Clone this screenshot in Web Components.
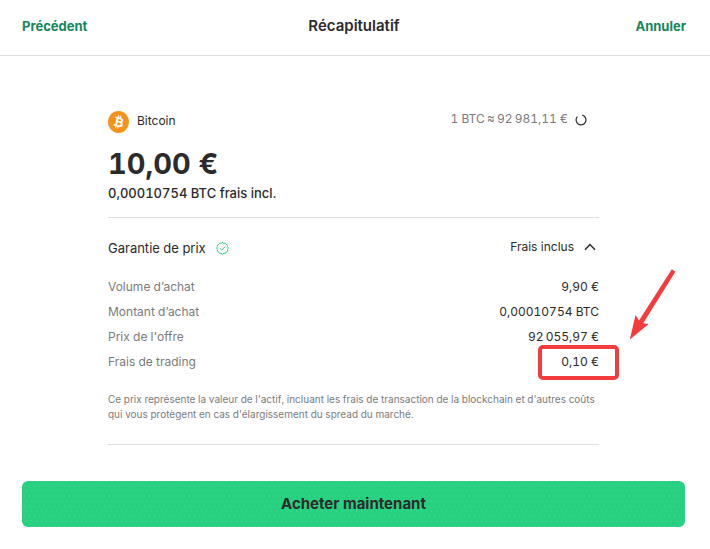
<!DOCTYPE html>
<html lang="fr">
<head>
<meta charset="utf-8">
<meta name="viewport" content="width=device-width, initial-scale=1">
<title>Récapitulatif</title>
<style>
  body { margin: 0; background: #fff; color: #2b2b2d; font-family: Inter, "Liberation Sans", sans-serif; font-variant-numeric: tabular-nums; --muted: #7b7b7d; --line: #e0e0e0; --green: #14875a; --mark: #f43b3e; }
</style>
</head>
<body>
<order-page></order-page>

<template id="order-page">
  <style>
    :host { display: flex; flex-direction: column; min-height: 100vh; }
    main { padding: 54px 111px 0 108px; }
    footer { padding: 36px 25px 22px 22px; }
  </style>
  <nav-header>
    <span slot="back">Précédent</span>
    Récapitulatif
    <span slot="cancel">Annuler</span>
  </nav-header>
  <main>
    <asset-summary></asset-summary>
    <price-details></price-details>
  </main>
  <footer><buy-button>Acheter maintenant</buy-button></footer>
</template>

<template id="nav-header">
  <style>
    :host { display: block; border-bottom: 1px solid var(--line); }
    header { display: grid; grid-template-columns: 1fr auto 1fr; align-items: center; height: 51px; padding: 0 24px 4px 22px; }
    h1 { margin: 0; font-size: 15px; font-weight: 600; line-height: 20px; }
    button { justify-self: start; border: 0; padding: 0; background: none; color: var(--green); font: 700 13px/20px Inter, sans-serif; cursor: pointer; }
    .end { justify-self: end; }
  </style>
  <header>
    <button type="button"><slot name="back"></slot></button>
    <h1><slot></slot></h1>
    <button type="button" class="end"><slot name="cancel"></slot></button>
  </header>
</template>

<template id="asset-summary">
  <style>
    :host { display: block; border-bottom: 1px solid var(--line); padding-bottom: 14px; }
    .top { display: flex; justify-content: space-between; align-items: center; height: 24px; }
    .asset, .rate { display: flex; align-items: center; gap: 8px; font-size: 12px; line-height: 20px; }
    .asset span { padding-bottom: 2px; }
    .rate { gap: 7px; padding: 0 12px 4px 0; color: var(--muted); }
    .rate span { padding-bottom: 2px; }
    svg { display: block; flex: none; }
    .rate svg { color: #2b2b2d; }
    .amount { margin: 11px 0 0; font-size: 29px; line-height: 38px; font-weight: 700; }
    .sub { margin: 0; font-size: 13px; line-height: 20px; font-weight: 500; }
  </style>
  <div class="top">
    <div class="asset">
      <svg width="21" height="22" viewBox="0 0 32 32" preserveAspectRatio="none" aria-hidden="true">
        <circle cx="16" cy="16" r="16" fill="#f7931a"/>
        <path fill="#fff" fill-rule="evenodd" d="M23.200 14c.3-2.100-1.300-3.200-3.500-4l.7-2.800-1.700-.4-.7 2.700-1.400-.3.700-2.800-1.700-.4-.7 2.800-3.500-.9-.5 1.800s1.300.3 1.200.3c.7.200.8.600.8 1l-2 7.900c-.1.200-.3.500-.8.400l-1.200-.3-.9 2 3.300.8-.7 2.900 1.700.4.700-2.900 1.400.4-.7 2.800 1.700.4.700-2.900c3 .6 5.200.3 6.100-2.300.8-2.100 0-3.400-1.500-4.200 1.100-.2 1.900-1 2.500-2.400zm-4 5.600c-.5 2.100-4.100 1-5.300.7l.9-3.800c1.200.3 5 .9 4.400 3.100zm.6-5.700c-.5 1.900-3.500.9-4.500.7l.8-3.500c1 .3 4.200.7 3.700 2.800z"/>
      </svg>
      <span>Bitcoin</span>
    </div>
    <div class="rate">
      <span>1 BTC&#8239;≈&#8239;92&#8239;981,11 €</span>
      <svg width="12" height="12" viewBox="0 0 12 12" fill="none" stroke="currentColor" stroke-width="1.200" aria-hidden="true"><path d="M7.300 1.200A4.900 4.900 0 1 1 2.400 2.600"/></svg>
    </div>
  </div>
  <p class="amount">10,00 €</p>
  <p class="sub">0,00010754 BTC frais incl.</p>
</template>

<template id="price-details">
  <style>
    :host { display: block; border-bottom: 1px solid var(--line); padding: 20px 0 22px; }
    .head { display: flex; justify-content: space-between; align-items: center; height: 20px; }
    h2 { display: flex; align-items: center; gap: 10px; margin: 0; font-size: 13px; font-weight: 400; line-height: 20px; }
    button { display: flex; align-items: center; gap: 10px; margin: 0; border: 0; padding: 0 3px 2px 0; background: none; color: inherit; font: 400 12px/20px Inter, sans-serif; cursor: pointer; }
    svg { display: block; flex: none; }
    dl { margin: 16px 0 0; }
    .note { margin: 18px 0 0; color: var(--muted); font-size: 10px; line-height: 15px; }
  </style>
  <div class="head">
    <h2>Garantie de prix
      <svg width="13" height="13" viewBox="0 0 14 14" fill="none" stroke="#25d07d" stroke-linejoin="round" stroke-linecap="round" aria-hidden="true">
        <path d="M7 .7Q8.200 2 9.900 1.200 10.500 2.900 12.500 3.300 12.100 5 13.300 6.500 12.100 7.800 12.700 9.800 10.900 10.200 10.400 12.100 8.500 11.700 7 13.300 5.500 11.700 3.600 12.100 3.100 10.200 1.300 9.800 1.900 7.800.7 6.500 1.900 5 1.500 3.300 3.500 2.900 4.100 1.200 5.800 2 7 .7Z"/>
        <path d="M4.700 7.200 6.300 8.700 9.400 5.500"/>
      </svg>
    </h2>
    <button type="button" aria-expanded="true">Frais inclus
      <svg width="12" height="8" viewBox="0 0 12 8" fill="none" stroke="currentColor" stroke-width="1.500" aria-hidden="true"><path d="M1 6.700 6 1.500 11 6.700"/></svg>
    </button>
  </div>
  <dl>
    <price-row><span slot="label">Volume d’achat</span>9,90 €</price-row>
    <price-row><span slot="label">Montant d’achat</span>0,00010754 BTC</price-row>
    <price-row><span slot="label">Prix de l'offre</span>92&#8239;055,97 €</price-row>
    <price-row marked><span slot="label">Frais de trading</span>0,10 €</price-row>
  </dl>
  <p class="note">Ce prix représente la valeur de l'actif, incluant les frais de transaction de la blockchain et d'autres coûts qui vous protègent en cas d'élargissement du spread du marché.</p>
</template>

<template id="price-row">
  <style>
    :host { display: block; position: relative; font-size: 12px; line-height: 25px; }
    div { display: flex; justify-content: space-between; }
    dt { color: var(--muted); }
    dd { margin: 0; }
    .box, .arrow { display: none; position: absolute; pointer-events: none; }
    :host([marked]) .box, :host([marked]) .arrow { display: block; }
    .box { box-sizing: border-box; right: -20px; top: -4px; width: 81px; height: 35px; border: 4px solid var(--mark); border-radius: 5px; }
    .arrow { right: -77px; bottom: 34px; }
  </style>
  <div><dt><slot name="label"></slot></dt><dd><slot></slot></dd></div>
  <span class="box"></span>
  <svg class="arrow" width="48" height="72" viewBox="0 0 48 72" aria-hidden="true"><path fill="var(--mark)" d="M43.800 1.200 47.400 3.800 15.200 55.200 20.700 56 1.800 71.500 7.600 47 11 52.500Z"/></svg>
</template>

<template id="buy-button">
  <style>
    :host { display: block; }
    button { display: block; width: 100%; height: 46px; border: 0; border-radius: 6px; padding: 0; color: #2b2b2d; font: 700 15px/24px Inter, sans-serif; cursor: pointer;
      background: radial-gradient(circle, #35d688 0 1px, transparent 1px) 0 0 / 5px 10px, radial-gradient(circle, #35d688 0 1px, transparent 1px) 2px 5px / 5px 10px, #27d17f; }
  </style>
  <button type="button"><slot></slot></button>
</template>

<script>
  for (const name of ["nav-header", "asset-summary", "price-row", "price-details", "buy-button", "order-page"]) {
    customElements.define(name, class extends HTMLElement {
      constructor() {
        super();
        this.attachShadow({ mode: "open" }).append(document.getElementById(name).content.cloneNode(true));
      }
    });
  }
</script>
</body>
</html>
